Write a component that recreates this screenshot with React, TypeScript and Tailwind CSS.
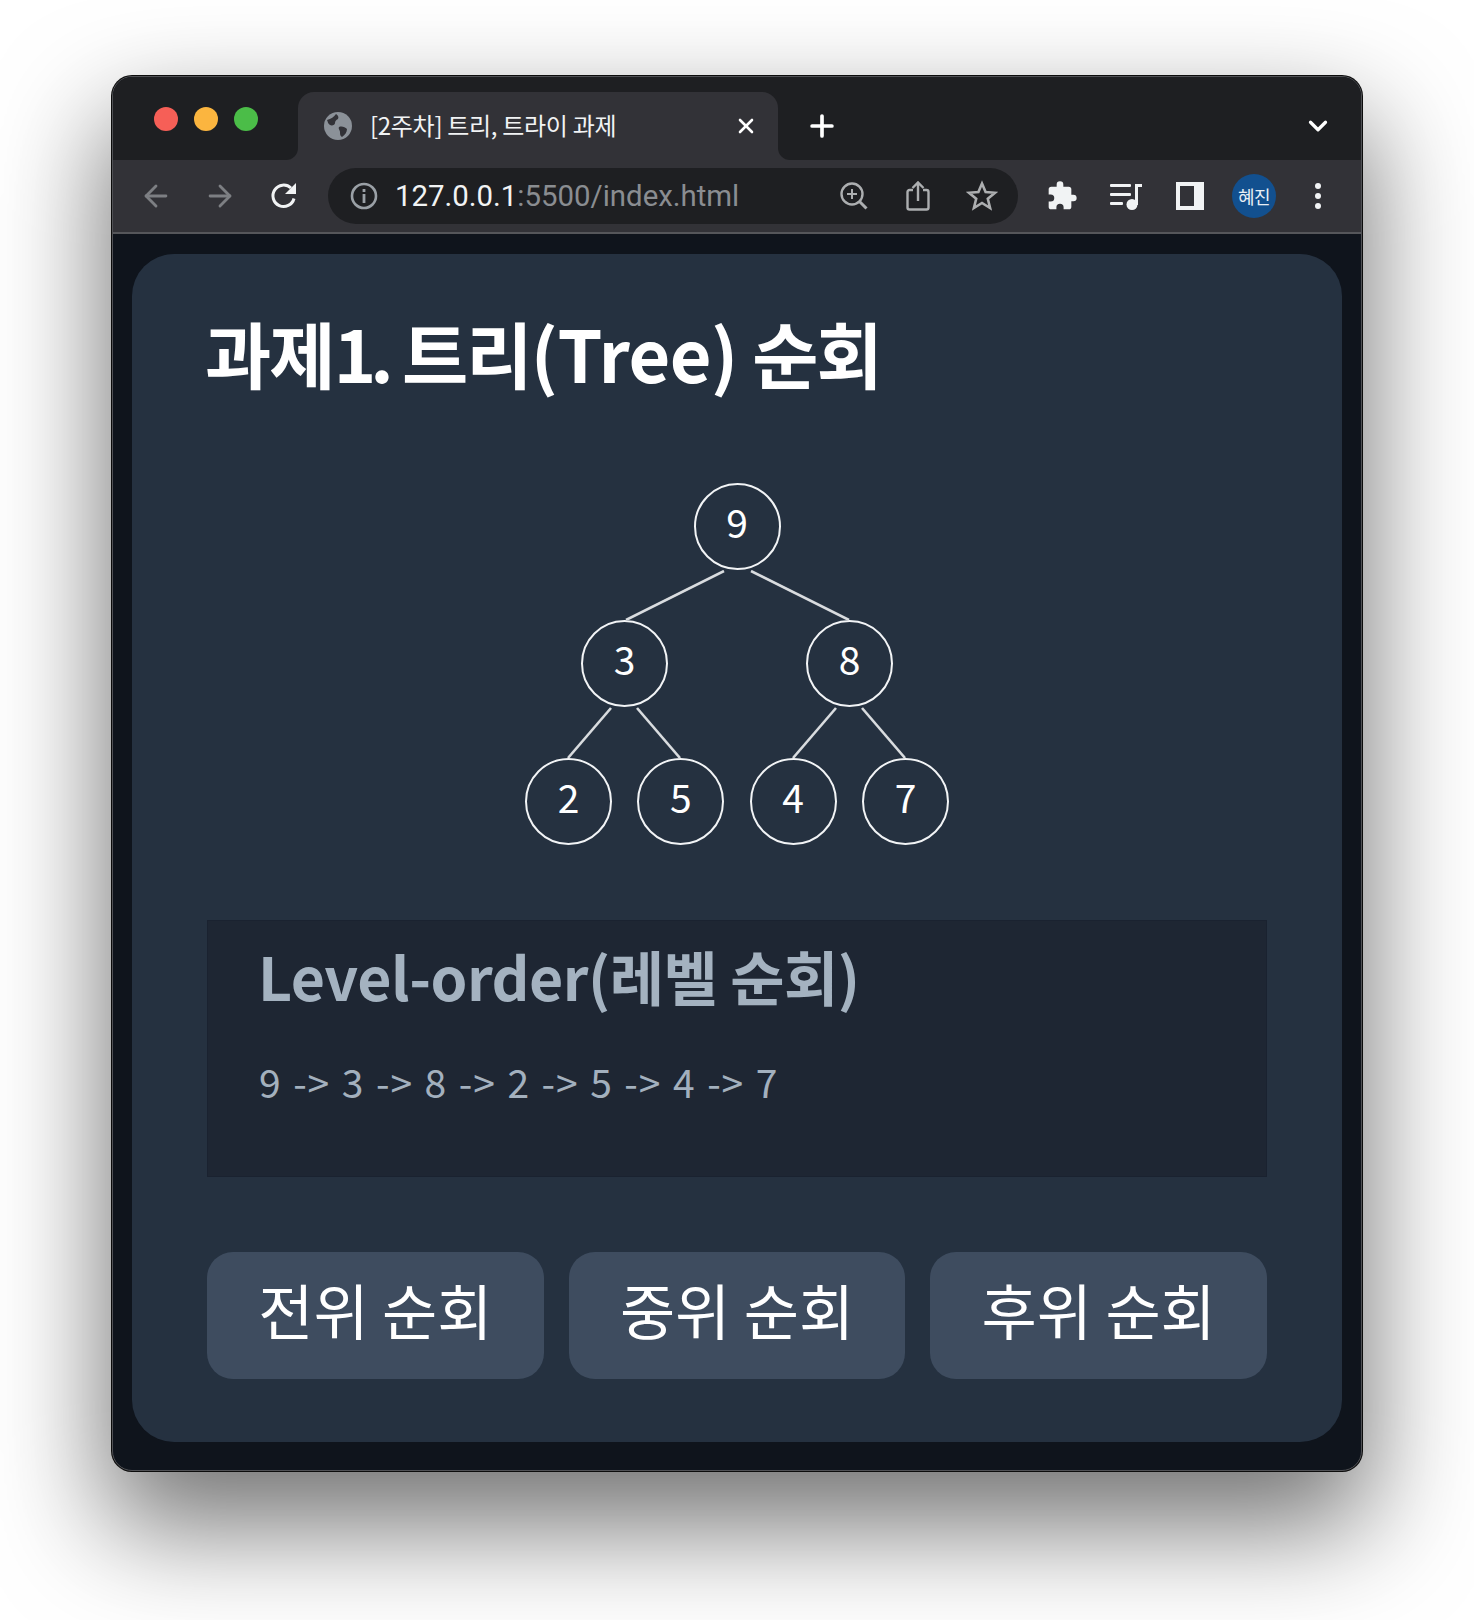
import { ArrowLeft, ArrowRight, ChevronDown, Plus, X } from "lucide-react";

const KR = "font-['Noto_Sans_CJK_KR','Noto_Sans',sans-serif]";

function TreeNode({ value }: { value: number }) {
  return (
    <div className="w-[87px] h-[87px] shrink-0 rounded-full border-2 border-[#f2f4f6] flex items-center justify-center pb-[11px] text-[39px] leading-none text-white">
      {value}
    </div>
  );
}

function Tree() {
  return (
    <div className={`w-[424px] mx-auto flex flex-col ${KR}`}>
      <div className="flex justify-center">
        <TreeNode value={9} />
      </div>
      <svg width="424" height="50" className="block" stroke="#d9dcdf" strokeWidth="2.6">
        <line x1="199" y1="1" x2="101" y2="50" />
        <line x1="226" y1="1" x2="324" y2="50" />
      </svg>
      <div className="flex justify-center gap-[138px]">
        <TreeNode value={3} />
        <TreeNode value={8} />
      </div>
      <svg width="424" height="51" className="block" stroke="#d9dcdf" strokeWidth="2.6">
        <line x1="86" y1="1" x2="43" y2="51" />
        <line x1="112" y1="1" x2="155" y2="51" />
        <line x1="311" y1="1" x2="268" y2="51" />
        <line x1="337" y1="1" x2="380" y2="51" />
      </svg>
      <div className="flex justify-between">
        <TreeNode value={2} />
        <TreeNode value={5} />
        <TreeNode value={4} />
        <TreeNode value={7} />
      </div>
    </div>
  );
}

function TabFoot({ side }: { side: "left" | "right" }) {
  return (
    <div className={`absolute bottom-0 w-[12px] h-[12px] bg-[#323237] ${side === "left" ? "-left-[12px]" : "-right-[12px]"}`}>
      <div className={`w-full h-full bg-[#1e1f22] ${side === "left" ? "rounded-br-[12px]" : "rounded-bl-[12px]"}`} />
    </div>
  );
}

function TabBar() {
  return (
    <div className="h-[83px] flex bg-[#1e1f22]">
      <div className="w-[185px] shrink-0 flex gap-[16px] pl-[41px] pt-[30px]">
        <span className="w-[24px] h-[24px] rounded-full bg-[#f65f57]" />
        <span className="w-[24px] h-[24px] rounded-full bg-[#fbb53f]" />
        <span className="w-[24px] h-[24px] rounded-full bg-[#4bbd48]" />
      </div>
      <div className="relative mt-[15px] w-[480px] h-[68px] bg-[#323237] rounded-t-[16px] flex items-center pl-[26px]">
        <TabFoot side="left" />
        <TabFoot side="right" />
        <svg width="28" height="28" viewBox="0 0 28 28" className="shrink-0">
          <circle cx="14" cy="14" r="14" fill="#8b9198" />
          <path d="M3 8c4-1 7-3 9-6 2 1 3 3 2 5-2 1-3 2-3 4s-3 3-5 2-2-3-3-5zM15 15c3-1 6 0 8 2 0 3-2 6-5 8-2-1-2-3-2-5s-2-3-1-5z" fill="#323237" />
        </svg>
        <span className={`ml-[18px] pb-[3px] text-[24px] leading-none text-[#f1f3f4] tracking-[-0.3px] ${KR}`}>[2주차] 트리, 트라이 과제</span>
        <X className="ml-auto mr-[20px] text-white" size={24} strokeWidth={2.6} />
      </div>
      <div className="flex-1 flex items-center justify-between pt-[15px] pl-[27px] pr-[28px]">
        <Plus className="text-white" size={34} strokeWidth={2.6} />
        <ChevronDown className="text-white" size={30} strokeWidth={2.6} />
      </div>
    </div>
  );
}

function ToolButton({ children }: { children: React.ReactNode }) {
  return <div className="w-[48px] h-[48px] shrink-0 flex items-center justify-center">{children}</div>;
}

function Toolbar() {
  return (
    <div className="h-[74px] bg-[#323237] border-b-2 border-[#55565a] flex items-center gap-[16px] pl-[19px]">
      <ToolButton>
        <ArrowLeft className="text-[#7d7f83]" size={34} strokeWidth={2} />
      </ToolButton>
      <ToolButton>
        <ArrowRight className="text-[#7d7f83]" size={34} strokeWidth={2} />
      </ToolButton>
      <ToolButton>
        <svg width="30" height="30" viewBox="0 0 30 30" fill="none">
          <path d="M25 17.5A10.7 10.7 0 1 1 22 7" stroke="#f1f3f4" strokeWidth="3" />
          <path d="M27 2v11H16z" fill="#f1f3f4" />
        </svg>
      </ToolButton>
      <div className="w-[690px] h-[56px] rounded-full bg-[#1e1f22] flex items-center pl-[22px] pr-[12px] ml-[4px]">
        <svg width="28" height="28" viewBox="0 0 28 28" fill="none" className="shrink-0">
          <circle cx="14" cy="14" r="12" stroke="#9aa0a6" strokeWidth="2.6" />
          <rect x="12.6" y="12" width="2.8" height="9" fill="#9aa0a6" />
          <rect x="12.6" y="7" width="2.8" height="3" fill="#9aa0a6" />
        </svg>
        <span className="ml-[17px] pt-[2px] text-[29.4px] leading-none font-['Roboto',sans-serif] text-[#f1f3f4]">
          127.0.0.1<span className="text-[#8a8d91]">:5500/index.html</span>
        </span>
        <div className="ml-auto flex gap-[16px]">
          <ToolButton>
            <svg width="30" height="30" viewBox="0 0 30 30" fill="none" stroke="#acaeb0" strokeWidth="2.4">
              <circle cx="13" cy="13" r="10.5" />
              <path d="M13 8v10M8 13h10" strokeWidth="2" />
              <path d="M20.5 20.5l7 7" strokeWidth="3" />
            </svg>
          </ToolButton>
          <ToolButton>
            <svg width="26" height="32" viewBox="0 0 26 32" fill="none" stroke="#acaeb0" strokeWidth="2.4">
              <path d="M8 10H4.5A2 2 0 0 0 2.5 12v15.5a2 2 0 0 0 2 2h17a2 2 0 0 0 2-2V12a2 2 0 0 0-2-2H18" />
              <path d="M13 21V3M7.5 8L13 2.5 18.5 8" />
            </svg>
          </ToolButton>
          <ToolButton>
            <svg width="32" height="32" viewBox="0 0 32 32" fill="none" stroke="#acaeb0" strokeWidth="2.6">
              <path d="M16 3.5l3.6 8.6 9.4.7-7.2 6 2.3 9.2L16 23l-8.1 5 2.3-9.2-7.2-6 9.4-.7z" />
            </svg>
          </ToolButton>
        </div>
      </div>
      <div className="flex gap-[16px] ml-[4px]">
        <ToolButton>
          <svg width="32" height="32" viewBox="0 0 24 24" fill="#f1f3f4">
            <path d="M20.5 11H19V7a2 2 0 0 0-2-2h-4V3.5a2.5 2.5 0 0 0-5 0V5H4a2 2 0 0 0-2 2v3.8h1.5a2.7 2.7 0 0 1 0 5.4H2V20a2 2 0 0 0 2 2h3.8v-1.5a2.7 2.7 0 0 1 5.4 0V22H17a2 2 0 0 0 2-2v-4h1.5a2.5 2.5 0 0 0 0-5z" />
          </svg>
        </ToolButton>
        <ToolButton>
          <svg width="34" height="30" viewBox="0 0 34 30" fill="#f1f3f4">
            <rect x="1" y="3" width="21" height="3" rx="1" />
            <rect x="1" y="12" width="21" height="3" rx="1" />
            <rect x="1" y="21" width="13" height="3" rx="1" />
            <circle cx="23" cy="23.5" r="5.5" />
            <path d="M26 3h7v3h-4v18h-3z" />
          </svg>
        </ToolButton>
        <ToolButton>
          <svg width="28" height="28" viewBox="0 0 28 28" fill="none">
            <rect x="2" y="2" width="24" height="24" stroke="#f1f3f4" strokeWidth="4" />
            <rect x="18" y="2" width="8" height="24" fill="#f1f3f4" />
          </svg>
        </ToolButton>
        <ToolButton>
          <div className={`w-[44px] h-[44px] rounded-full bg-[#12508f] flex items-center justify-center text-[18px] leading-none text-[#e8eef5] tracking-[-0.5px] ${KR}`}>
            혜진
          </div>
        </ToolButton>
        <ToolButton>
          <div className="flex flex-col gap-[4px]">
            <span className="w-[6px] h-[6px] rounded-full bg-[#f1f3f4]" />
            <span className="w-[6px] h-[6px] rounded-full bg-[#f1f3f4]" />
            <span className="w-[6px] h-[6px] rounded-full bg-[#f1f3f4]" />
          </div>
        </ToolButton>
      </div>
    </div>
  );
}

function TraversalButton({ label }: { label: string }) {
  return (
    <button className="flex-1 h-[127px] rounded-[26px] bg-[#3e4c5f] text-white text-[60px] leading-none pb-[13px]">
      {label}
    </button>
  );
}

export default function App() {
  return (
    <div className="h-[1620px] overflow-hidden bg-white pt-[76px] pl-[112px]">
      <div className="w-[1250px] h-[1395px] rounded-[20px] bg-[#0f141c] border border-[#505155] shadow-[0_0_0_1px_#0c0c0c,0_50px_110px_6px_rgba(0,0,0,0.55)] overflow-hidden">
        <TabBar />
        <Toolbar />
        <main className={`mx-[19px] mt-[20px] h-[1188px] rounded-[42px] bg-[#253140] px-[75px] ${KR}`}>
          <h1 className="-ml-[2px] pt-[53px] h-[229px] text-[72px] leading-[90px] font-bold text-white tracking-[-1.9px]">
            과제<span className="tracking-[-6px]">1.</span> 트리<span className="tracking-[-0.5px]">(Tree)</span> 순회
          </h1>
          <Tree />
          <section className="mt-[75px] h-[257px] bg-[#1e2633] border border-[#1a2230] pl-[50px] pt-[17px]">
            <h2 className="text-[59px] leading-[76px] font-bold text-[#a4b2c0] tracking-[-0.5px]">Level-order(레벨 순회)</h2>
            <p className="mt-[42px] ml-[1px] text-[39px] leading-[50px] text-[#a3b0be] tracking-[0.9px] [word-spacing:2px]">9 -&gt; 3 -&gt; 8 -&gt; 2 -&gt; 5 -&gt; 4 -&gt; 7</p>
          </section>
          <div className="mt-[75px] flex gap-[25px]">
            <TraversalButton label="전위 순회" />
            <TraversalButton label="중위 순회" />
            <TraversalButton label="후위 순회" />
          </div>
        </main>
      </div>
    </div>
  );
}
